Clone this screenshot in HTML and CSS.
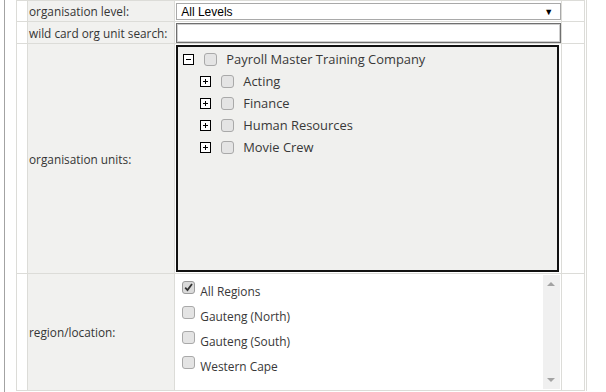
FILE: index.html
```html
<!DOCTYPE html>
<html>
<head>
<meta charset="utf-8">
<link rel="stylesheet" href="styles.css">
</head>
<body>
<div class="frame">
  <table class="form">
    <tr class="r1">
      <td class="gut"></td>
      <td class="lbl">organisation level:</td>
      <td class="val">
        <div class="select"><span>All Levels</span><span class="arrow">&#9660;</span></div>
      </td>
      <td class="gut2"></td>
    </tr>
    <tr class="r2">
      <td class="gut"></td>
      <td class="lbl">wild card org unit search:</td>
      <td class="val"><div class="input"></div></td>
      <td class="gut2"></td>
    </tr>
    <tr class="r3">
      <td class="gut"></td>
      <td class="lbl">organisation units:</td>
      <td class="val top">
        <div class="tree">
          <div class="node">
            <svg class="tog" width="11" height="11" viewBox="0 0 11 11"><rect x="0.5" y="0.5" width="10" height="10" fill="#fff" stroke="#000"/><path d="M3 5.5h5" stroke="#000" stroke-width="1"/></svg>
            <span class="cb"></span>
            <span class="txt">Payroll Master Training Company</span>
          </div>
          <div class="node child">
            <svg class="tog" width="11" height="11" viewBox="0 0 11 11"><rect x="0.5" y="0.5" width="10" height="10" fill="#fff" stroke="#000"/><path d="M3 5.5h5M5.5 3v5" stroke="#000" stroke-width="1"/></svg>
            <span class="cb"></span>
            <span class="txt">Acting</span>
          </div>
          <div class="node child">
            <svg class="tog" width="11" height="11" viewBox="0 0 11 11"><rect x="0.5" y="0.5" width="10" height="10" fill="#fff" stroke="#000"/><path d="M3 5.5h5M5.5 3v5" stroke="#000" stroke-width="1"/></svg>
            <span class="cb"></span>
            <span class="txt">Finance</span>
          </div>
          <div class="node child">
            <svg class="tog" width="11" height="11" viewBox="0 0 11 11"><rect x="0.5" y="0.5" width="10" height="10" fill="#fff" stroke="#000"/><path d="M3 5.5h5M5.5 3v5" stroke="#000" stroke-width="1"/></svg>
            <span class="cb"></span>
            <span class="txt">Human Resources</span>
          </div>
          <div class="node child">
            <svg class="tog" width="11" height="11" viewBox="0 0 11 11"><rect x="0.5" y="0.5" width="10" height="10" fill="#fff" stroke="#000"/><path d="M3 5.5h5M5.5 3v5" stroke="#000" stroke-width="1"/></svg>
            <span class="cb"></span>
            <span class="txt">Movie Crew</span>
          </div>
        </div>
      </td>
      <td class="gut2"></td>
    </tr>
    <tr class="r4">
      <td class="gut"></td>
      <td class="lbl">region/location:</td>
      <td class="val top">
        <div class="list">
          <div class="items">
            <div class="item"><span class="cb checked"><svg width="11" height="11" viewBox="0 0 11 11"><path d="M2.2 5.6l2.3 2.4 4.5-6" fill="none" stroke="#333" stroke-width="1.8"/></svg></span><span>All Regions</span></div>
            <div class="item"><span class="cb"></span><span>Gauteng (North)</span></div>
            <div class="item"><span class="cb"></span><span>Gauteng (South)</span></div>
            <div class="item"><span class="cb"></span><span>Western Cape</span></div>
          </div>
          <div class="sbar">
            <span class="up"></span>
            <span class="down"></span>
          </div>
        </div>
      </td>
      <td class="gut2"></td>
    </tr>
  </table>
</div>
</body>
</html>
```

FILE: styles.css
```css
html, body {
  margin: 0;
  padding: 0;
  background: #fff;
}
body {
  font-family: "Open Sans", "Liberation Sans", sans-serif;
  width: 606px;
  height: 392px;
  overflow: hidden;
}
.frame {
  margin-left: 4px;
  width: 594px;
  height: 400px;
  border-left: 1px solid #a3a3a3;
  border-right: 1px solid #a3a3a3;
  padding-left: 11px;
  box-sizing: content-box;
}
.form {
  border-collapse: collapse;
  width: 571px;
  table-layout: fixed;
  border-right: 3px double #dcdcd8;
}
.form td {
  border: 1px solid #dcdcd8;
  padding: 0;
}
.gut { width: 10px; background: #fff; }
.gut2 { width: 22px; background: #fff; }
.lbl {
  width: 145px;
  background: #f1f1ef;
  color: #353535;
  font-size: 11.8px;
  padding-left: 1px !important;
  vertical-align: middle;
  white-space: nowrap;
}
.val { width: 385px; background: #fff; vertical-align: middle; }
.val.top { vertical-align: top; }
.r1 { height: 21px; }
.r2 { height: 22px; }
.r3 { height: 230px; }
.r4 { height: 117px; }

.select {
  box-sizing: border-box;
  width: 385px;
  height: 17px;
  margin: 1px 0 0 1px;
  border: 1px solid #a9a9a9;
  display: flex;
  align-items: center;
  justify-content: space-between;
  font-family: "Liberation Sans", Arial, sans-serif;
  font-size: 12px;
  color: #000;
  padding: 0 7px 0 4px;
}
.select .arrow { font-size: 9px; }
.input {
  box-sizing: border-box;
  width: 385px;
  height: 20px;
  margin: 0 0 0 1px;
  border: 1px solid #6f6f6f;
  box-shadow: inset 0 0 0 1px #cfcfcf;
}
.tree {
  box-sizing: border-box;
  width: 383px;
  height: 227px;
  margin: 1px 0 0 1px;
  border: 2px solid #111;
  background: #f0f0ee;
  padding: 1px 0 0 5px;
  font-size: 12.9px;
  color: #383838;
}
.node {
  height: 22px;
  display: flex;
  align-items: center;
}
.node.child { padding-left: 17px; }
.tog { flex: none; display: block; }
.cb {
  flex: none;
  box-sizing: border-box;
  width: 13px;
  height: 13px;
  border: 1px solid #a9a9a9;
  border-radius: 3px;
  background: #e4e4e4;
  display: inline-flex;
  align-items: center;
  justify-content: center;
}
.node .cb { margin: 0 9px 0 10px; }
.list {
  display: flex;
  height: 114px;
  margin-top: 1px;
}
.items {
  flex: 1;
  padding: 3px 0 0 7px;
  font-size: 11.9px;
  color: #383838;
}
.item {
  height: 25px;
  display: flex;
  align-items: center;
}
.item .cb { margin-right: 5px; position: relative; top: -3px; }
.cb.checked { background: #dadada; border-color: #9c9c9c; }
.sbar {
  width: 17px;
  flex: none;
  background: #f0f0f0;
  display: flex;
  flex-direction: column;
  justify-content: space-between;
  align-items: center;
  padding: 7px 0 7px;
  margin-right: 1px;
}
.up {
  width: 0; height: 0;
  border-left: 4px solid transparent;
  border-right: 4px solid transparent;
  border-bottom: 4px solid #a3a3a3;
}
.down {
  width: 0; height: 0;
  border-left: 4px solid transparent;
  border-right: 4px solid transparent;
  border-top: 4px solid #a3a3a3;
}
```
